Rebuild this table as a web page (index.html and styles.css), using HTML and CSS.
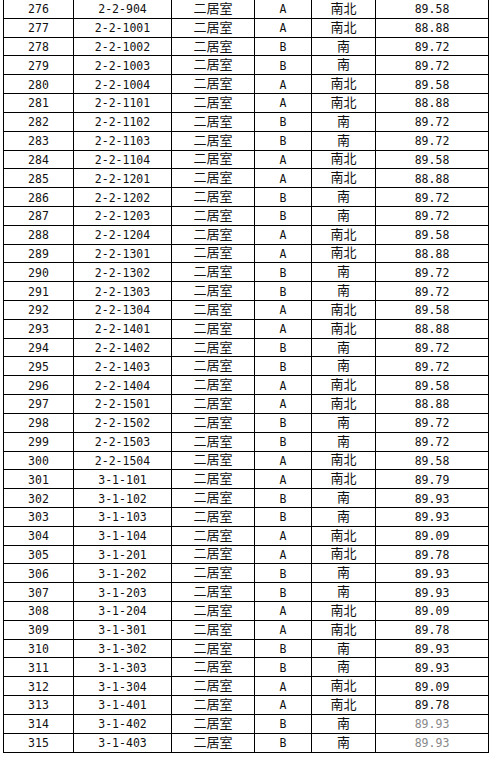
FILE: index.html
```html
<!DOCTYPE html>
<html lang="zh">
<head>
<meta charset="utf-8">
<title>房源表</title>
<link rel="stylesheet" href="styles.css">
</head>
<body>
<table class="sheet">
<colgroup>
<col class="c1"><col class="c2"><col class="c3"><col class="c4"><col class="c5"><col class="c6">
</colgroup>
<tbody>
<tr><td>276</td><td>2-2-904</td><td class="zh">二居室</td><td>A</td><td class="zh">南北</td><td>89.58</td></tr>
<tr><td>277</td><td>2-2-1001</td><td class="zh">二居室</td><td>A</td><td class="zh">南北</td><td>88.88</td></tr>
<tr><td>278</td><td>2-2-1002</td><td class="zh">二居室</td><td>B</td><td class="zh">南</td><td>89.72</td></tr>
<tr><td>279</td><td>2-2-1003</td><td class="zh">二居室</td><td>B</td><td class="zh">南</td><td>89.72</td></tr>
<tr><td>280</td><td>2-2-1004</td><td class="zh">二居室</td><td>A</td><td class="zh">南北</td><td>89.58</td></tr>
<tr><td>281</td><td>2-2-1101</td><td class="zh">二居室</td><td>A</td><td class="zh">南北</td><td>88.88</td></tr>
<tr><td>282</td><td>2-2-1102</td><td class="zh">二居室</td><td>B</td><td class="zh">南</td><td>89.72</td></tr>
<tr><td>283</td><td>2-2-1103</td><td class="zh">二居室</td><td>B</td><td class="zh">南</td><td>89.72</td></tr>
<tr><td>284</td><td>2-2-1104</td><td class="zh">二居室</td><td>A</td><td class="zh">南北</td><td>89.58</td></tr>
<tr><td>285</td><td>2-2-1201</td><td class="zh">二居室</td><td>A</td><td class="zh">南北</td><td>88.88</td></tr>
<tr><td>286</td><td>2-2-1202</td><td class="zh">二居室</td><td>B</td><td class="zh">南</td><td>89.72</td></tr>
<tr><td>287</td><td>2-2-1203</td><td class="zh">二居室</td><td>B</td><td class="zh">南</td><td>89.72</td></tr>
<tr><td>288</td><td>2-2-1204</td><td class="zh">二居室</td><td>A</td><td class="zh">南北</td><td>89.58</td></tr>
<tr><td>289</td><td>2-2-1301</td><td class="zh">二居室</td><td>A</td><td class="zh">南北</td><td>88.88</td></tr>
<tr><td>290</td><td>2-2-1302</td><td class="zh">二居室</td><td>B</td><td class="zh">南</td><td>89.72</td></tr>
<tr><td>291</td><td>2-2-1303</td><td class="zh">二居室</td><td>B</td><td class="zh">南</td><td>89.72</td></tr>
<tr><td>292</td><td>2-2-1304</td><td class="zh">二居室</td><td>A</td><td class="zh">南北</td><td>89.58</td></tr>
<tr><td>293</td><td>2-2-1401</td><td class="zh">二居室</td><td>A</td><td class="zh">南北</td><td>88.88</td></tr>
<tr><td>294</td><td>2-2-1402</td><td class="zh">二居室</td><td>B</td><td class="zh">南</td><td>89.72</td></tr>
<tr><td>295</td><td>2-2-1403</td><td class="zh">二居室</td><td>B</td><td class="zh">南</td><td>89.72</td></tr>
<tr><td>296</td><td>2-2-1404</td><td class="zh">二居室</td><td>A</td><td class="zh">南北</td><td>89.58</td></tr>
<tr><td>297</td><td>2-2-1501</td><td class="zh">二居室</td><td>A</td><td class="zh">南北</td><td>88.88</td></tr>
<tr><td>298</td><td>2-2-1502</td><td class="zh">二居室</td><td>B</td><td class="zh">南</td><td>89.72</td></tr>
<tr><td>299</td><td>2-2-1503</td><td class="zh">二居室</td><td>B</td><td class="zh">南</td><td>89.72</td></tr>
<tr><td>300</td><td>2-2-1504</td><td class="zh">二居室</td><td>A</td><td class="zh">南北</td><td>89.58</td></tr>
<tr><td>301</td><td>3-1-101</td><td class="zh">二居室</td><td>A</td><td class="zh">南北</td><td>89.79</td></tr>
<tr><td>302</td><td>3-1-102</td><td class="zh">二居室</td><td>B</td><td class="zh">南</td><td>89.93</td></tr>
<tr><td>303</td><td>3-1-103</td><td class="zh">二居室</td><td>B</td><td class="zh">南</td><td>89.93</td></tr>
<tr><td>304</td><td>3-1-104</td><td class="zh">二居室</td><td>A</td><td class="zh">南北</td><td>89.09</td></tr>
<tr><td>305</td><td>3-1-201</td><td class="zh">二居室</td><td>A</td><td class="zh">南北</td><td>89.78</td></tr>
<tr><td>306</td><td>3-1-202</td><td class="zh">二居室</td><td>B</td><td class="zh">南</td><td>89.93</td></tr>
<tr><td>307</td><td>3-1-203</td><td class="zh">二居室</td><td>B</td><td class="zh">南</td><td>89.93</td></tr>
<tr><td>308</td><td>3-1-204</td><td class="zh">二居室</td><td>A</td><td class="zh">南北</td><td>89.09</td></tr>
<tr><td>309</td><td>3-1-301</td><td class="zh">二居室</td><td>A</td><td class="zh">南北</td><td>89.78</td></tr>
<tr><td>310</td><td>3-1-302</td><td class="zh">二居室</td><td>B</td><td class="zh">南</td><td>89.93</td></tr>
<tr><td>311</td><td>3-1-303</td><td class="zh">二居室</td><td>B</td><td class="zh">南</td><td>89.93</td></tr>
<tr><td>312</td><td>3-1-304</td><td class="zh">二居室</td><td>A</td><td class="zh">南北</td><td>89.09</td></tr>
<tr><td>313</td><td>3-1-401</td><td class="zh">二居室</td><td>A</td><td class="zh">南北</td><td>89.78</td></tr>
<tr><td>314</td><td>3-1-402</td><td class="zh">二居室</td><td>B</td><td class="zh">南</td><td class="faint">89.93</td></tr>
<tr><td>315</td><td>3-1-403</td><td class="zh">二居室</td><td>B</td><td class="zh">南</td><td class="faint">89.93</td></tr>
</tbody>
</table>
</body>
</html>
```
FILE: styles.css
```css
html, body {
  margin: 0;
  padding: 0;
  background: #fff;
}

.sheet {
  border-collapse: collapse;
  table-layout: fixed;
  width: 485px;
  margin: -1px 0 0 3px;
  font-family: "DejaVu Sans Mono", "Noto Sans CJK SC", monospace;
  font-size: 11.5px;
  color: #111;
}

.c1 { width: 70px; }
.c2 { width: 98px; }
.c3 { width: 83px; }
.c4 { width: 57px; }
.c5 { width: 64px; }
.c6 { width: 113px; }

.sheet tr {
  height: 18.82px;
}

.sheet td {
  border: 1px solid #000;
  padding: 2px 0 0;
  text-align: center;
  vertical-align: middle;
  line-height: 15px;
  white-space: nowrap;
}

.sheet td.zh {
  font-family: "Noto Sans CJK SC", sans-serif;
  font-size: 13px;
  line-height: 13px;
  padding: 0 0 3px;
}

.sheet td.faint {
  color: #888;
}
```
